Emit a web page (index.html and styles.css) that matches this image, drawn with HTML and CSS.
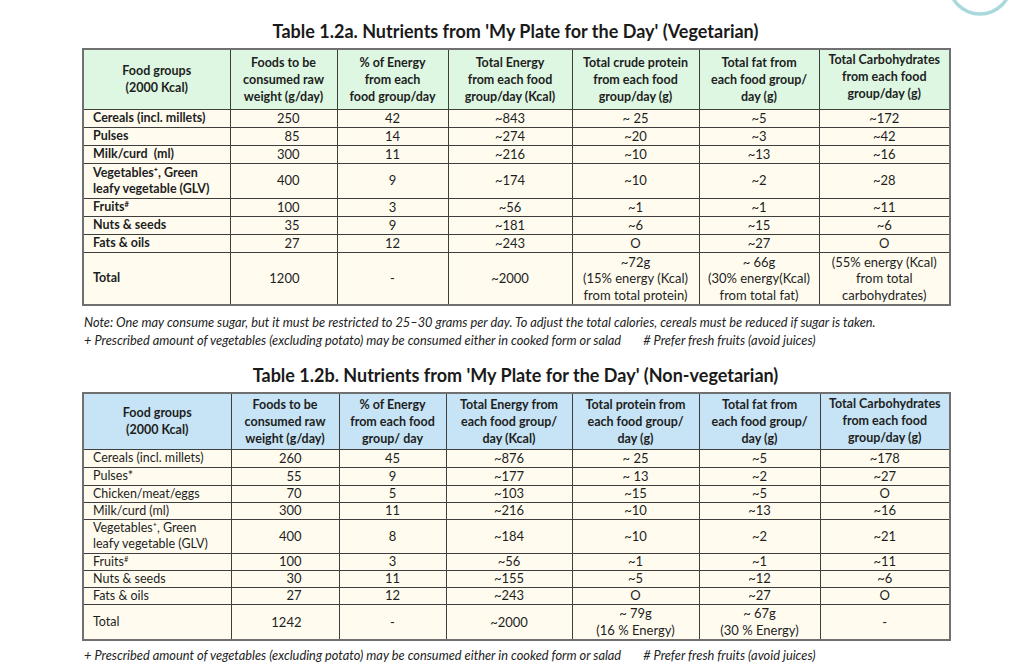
FILE: index.html
```html
<!DOCTYPE html>
<html lang="en">
<head>
<meta charset="utf-8">
<title>Nutrients from My Plate for the Day</title>
<link rel="stylesheet" href="styles.css">
</head>
<body>
<svg class="deco" width="80" height="30" viewBox="0 0 80 30" aria-hidden="true">
  <circle cx="40" cy="-17" r="31" fill="none" stroke="#a9d9dc" stroke-width="3.5"/>
</svg>
<main class="page">
  <h2 class="title">Table 1.2a. Nutrients from 'My Plate for the Day' (Vegetarian)</h2>
  <table class="nt veg">
    <colgroup>
      <col style="width:147px"><col style="width:107px"><col style="width:111px"><col style="width:124px"><col style="width:127px"><col style="width:120px"><col style="width:131px">
    </colgroup>
    <thead>
      <tr class="h61">
        <th>Food groups<br>(2000 Kcal)</th>
        <th>Foods to be<br>consumed raw<br>weight (g/day)</th>
        <th>% of Energy<br>from each<br>food group/day</th>
        <th>Total Energy<br>from each food<br>group/day (Kcal)</th>
        <th>Total crude protein<br>from each food<br>group/day (g)</th>
        <th>Total fat from<br>each food group/<br>day (g)</th>
        <th class="up">Total Carbohydrates<br>from each food<br>group/day (g)</th>
      </tr>
    </thead>
    <tbody>
      <tr class="r18"><td class="fg">Cereals (incl. millets)</td><td class="rw">250</td><td>42</td><td>~843</td><td>~ 25</td><td>~5</td><td>~172</td></tr>
      <tr class="r18"><td class="fg">Pulses</td><td class="rw">85</td><td>14</td><td>~274</td><td>~20</td><td>~3</td><td>~42</td></tr>
      <tr class="r18"><td class="fg">Milk/curd&nbsp; (ml)</td><td class="rw">300</td><td>11</td><td>~216</td><td>~10</td><td>~13</td><td>~16</td></tr>
      <tr class="r35"><td class="fg">Vegetables⁺, Green<br>leafy vegetable (GLV)</td><td class="rw">400</td><td>9</td><td>~174</td><td>~10</td><td>~2</td><td>~28</td></tr>
      <tr class="r18"><td class="fg">Fruits<sup>#</sup></td><td class="rw">100</td><td>3</td><td>~56</td><td>~1</td><td>~1</td><td>~11</td></tr>
      <tr class="r18"><td class="fg">Nuts &amp; seeds</td><td class="rw">35</td><td>9</td><td>~181</td><td>~6</td><td>~15</td><td>~6</td></tr>
      <tr class="r18"><td class="fg">Fats &amp; oils</td><td class="rw">27</td><td>12</td><td>~243</td><td>O</td><td>~27</td><td>O</td></tr>
      <tr class="r53"><td class="fg">Total</td><td class="rw">1200</td><td>-</td><td>~2000</td><td>~72g<br>(15% energy (Kcal)<br>from total protein)</td><td>~ 66g<br>(30% energy(Kcal)<br>from total fat)</td><td class="up">(55% energy (Kcal)<br>from total<br>carbohydrates)</td></tr>
    </tbody>
  </table>
  <div class="notes">
    <p>Note: One may consume sugar, but it must be restricted to 25–30 grams per day. To adjust the total calories, cereals must be reduced if sugar is taken.</p>
    <p><span>+ Prescribed amount of vegetables (excluding potato) may be consumed either in cooked form or salad</span><span class="gap"># Prefer fresh fruits (avoid juices)</span></p>
  </div>

  <h2 class="title">Table 1.2b. Nutrients from 'My Plate for the Day' (Non-vegetarian)</h2>
  <table class="nt nonveg">
    <colgroup>
      <col style="width:148px"><col style="width:108px"><col style="width:107px"><col style="width:126px"><col style="width:127px"><col style="width:121px"><col style="width:130px">
    </colgroup>
    <thead>
      <tr class="h57">
        <th>Food groups<br>(2000 Kcal)</th>
        <th>Foods to be<br>consumed raw<br>weight (g/day)</th>
        <th>% of Energy<br>from each food<br>group/ day</th>
        <th>Total Energy from<br>each food group/<br>day (Kcal)</th>
        <th>Total protein from<br>each food group/<br>day (g)</th>
        <th>Total fat from<br>each food group/<br>day (g)</th>
        <th class="up">Total Carbohydrates<br>from each food<br>group/day (g)</th>
      </tr>
    </thead>
    <tbody>
      <tr class="r18"><td class="fg">Cereals (incl. millets)</td><td class="rw">260</td><td>45</td><td>~876</td><td>~ 25</td><td>~5</td><td>~178</td></tr>
      <tr class="r18"><td class="fg">Pulses*</td><td class="rw">55</td><td>9</td><td>~177</td><td>~ 13</td><td>~2</td><td>~27</td></tr>
      <tr class="r17"><td class="fg">Chicken/meat/eggs</td><td class="rw">70</td><td>5</td><td>~103</td><td>~15</td><td>~5</td><td>O</td></tr>
      <tr class="r17"><td class="fg">Milk/curd (ml)</td><td class="rw">300</td><td>11</td><td>~216</td><td>~10</td><td>~13</td><td>~16</td></tr>
      <tr class="r34"><td class="fg">Vegetables⁺, Green<br>leafy vegetable (GLV)</td><td class="rw">400</td><td>8</td><td>~184</td><td>~10</td><td>~2</td><td>~21</td></tr>
      <tr class="r17"><td class="fg">Fruits<sup>#</sup></td><td class="rw">100</td><td>3</td><td>~56</td><td>~1</td><td>~1</td><td>~11</td></tr>
      <tr class="r17"><td class="fg">Nuts &amp; seeds</td><td class="rw">30</td><td>11</td><td>~155</td><td>~5</td><td>~12</td><td>~6</td></tr>
      <tr class="r17"><td class="fg">Fats &amp; oils</td><td class="rw">27</td><td>12</td><td>~243</td><td>O</td><td>~27</td><td>O</td></tr>
      <tr class="r36"><td class="fg">Total</td><td class="rw">1242</td><td>-</td><td>~2000</td><td>~ 79g<br>(16 % Energy)</td><td>~ 67g<br>(30 % Energy)</td><td>-</td></tr>
    </tbody>
  </table>
  <div class="notes notes-b">
    <p><span>+ Prescribed amount of vegetables (excluding potato) may be consumed either in cooked form or salad</span><span class="gap"># Prefer fresh fruits (avoid juices)</span></p>
  </div>
</main>
</body>
</html>
```

FILE: styles.css
```css
* { box-sizing: border-box; }
html, body { margin: 0; padding: 0; background: #ffffff; }
body {
  font-family: Lato, "Open Sans", "Liberation Sans", sans-serif;
  color: #1e1e1e;
  width: 1024px;
  height: 666px;
  overflow: hidden;
  position: relative;
}
.deco { position: absolute; top: 0; left: 940px; }
.page {
  width: 867px;
  margin-left: 82px;
  padding-top: 18px;
}
.title {
  margin: 0 0 4px;
  font-size: 18px;
  font-weight: 700;
  line-height: 26px;
  text-align: center;
  color: #1a1a1a;
}

.nt {
  width: 867px;
  border-collapse: collapse;
  table-layout: fixed;
  border: 2px solid #707070;
  font-size: 13px;
}
.nt th, .nt td {
  border: 1px solid #3e3e3e;
  text-align: center;
  vertical-align: middle;
  padding: 0 4px;
}
.nt th { font-weight: 700; font-size: 12.5px; line-height: 17px; }
.nt td { line-height: 15px; }
.nt td.fg { line-height: 16px; }
.nt td.up, .r53 td, .r36 td { line-height: 16.5px; }
.veg thead th { background: #ddf7e2; }
.nonveg thead th { background: #c6e4f5; }
.nt tbody td { background: #fffcef; }
.nt td.fg { text-align: left; padding-left: 9px; font-size: 12.5px; white-space: nowrap; }
.veg td.fg { font-weight: 700; }
.nt td.rw { text-align: right; padding-right: 37px; }
.nt sup { font-size: 7.5px; line-height: 0; vertical-align: baseline; position: relative; top: -4px; }
.nt .up { vertical-align: top; padding-top: 1px; }

.h61 { height: 60px; }
.h57 { height: 56px; }
.r17 { height: 17px; }
.r18 { height: 18px; }
.r34 { height: 34px; }
.r35 { height: 35px; }
.r36 { height: 36px; }
.r53 { height: 53px; }

.notes { padding: 7px 0 0 2px; margin-bottom: 13px; }
.notes p {
  margin: 0;
  font-style: italic;
  font-size: 12.8px;
  line-height: 18px;
  color: #222;
  white-space: nowrap;
}
.notes .gap { margin-left: 22px; }
.notes-b { padding-top: 5px; margin-bottom: 0; }
```
